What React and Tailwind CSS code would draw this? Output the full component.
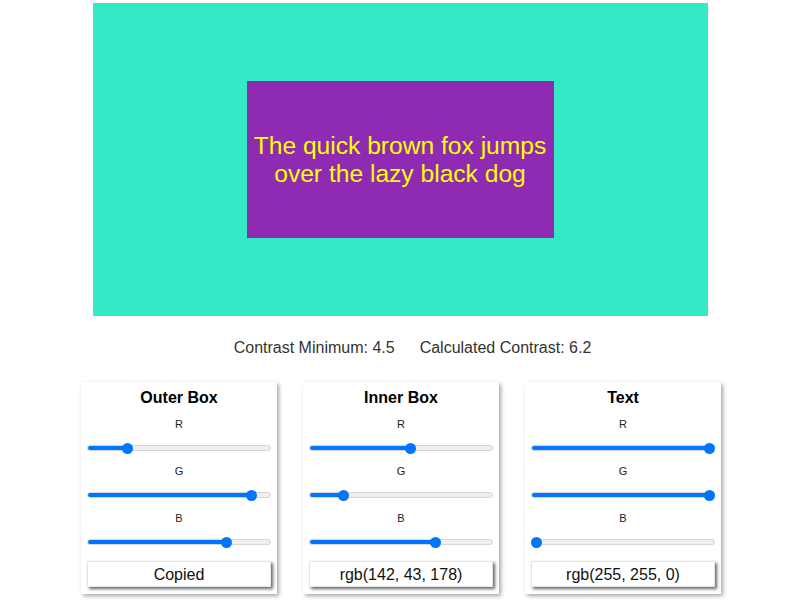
import React from "react";

const cards = [
  { title: "Outer Box", vals: [52, 234, 198], button: "Copied" },
  { title: "Inner Box", vals: [142, 43, 178], button: "rgb(142, 43, 178)" },
  { title: "Text", vals: [255, 255, 0], button: "rgb(255, 255, 0)" },
];

function Slider({ value }) {
  const frac = value / 255;
  const left = 5.5 + frac * 173;
  return (
    <div className="relative mt-[9px] mb-[9px] h-[16px] w-full flex items-center">
      <div
        className="h-[6px] w-full rounded-full border"
        style={{
          background: `linear-gradient(to right, #0075ff 0px, #0075ff ${left}px, #efefef ${left}px, #efefef 100%)`,
          borderColor: "#d6d6d6",
        }}
      />
      <div
        className="absolute top-[2.5px] h-[11px] w-[11px] -ml-[5.5px] rounded-full bg-[#0075ff]"
        style={{ left: `${left}px` }}
      />
    </div>
  );
}

function Card({ title, vals, button }) {
  const labels = ["R", "G", "B"];
  return (
    <div className="w-[196px] bg-white px-[6px] pt-[7px] pb-[7px] shadow-[2px_2px_4px_rgba(0,0,0,0.35)] flex flex-col">
      <div className="h-[18px] leading-[18px] text-center font-bold text-[16px] text-black">{title}</div>
      <div className="mt-[11px] flex flex-col">
        {labels.map((l, i) => (
          <div key={l} className="flex flex-col">
            <div className="h-[13px] leading-[13px] text-center text-[11px] text-[#222]">{l}</div>
            <Slider value={vals[i]} />
          </div>
        ))}
      </div>
      <button className="mt-[2px] h-[26px] w-full bg-white text-[16px] text-[#111] leading-[26px] shadow-[2px_2px_3px_rgba(0,0,0,0.6)] border border-[#e5e5e5]">
        {button}
      </button>
    </div>
  );
}

export default function App() {
  return (
    <div className="w-[800px] h-[600px] bg-white overflow-hidden font-['Liberation_Sans',Arial,sans-serif]">
      <div className="pt-[3px] flex justify-center">
        <div className="w-[615px] h-[313px] bg-[rgb(52,234,198)] flex items-center justify-center">
          <div className="w-[307px] h-[157px] bg-[rgb(142,43,178)] flex items-center justify-center">
            <p className="text-[24.6px] leading-[28px] text-[rgb(255,255,0)] text-center">
              The quick brown fox jumps over the lazy black dog
            </p>
          </div>
        </div>
      </div>
      <div className="mt-[23px] pl-[25px] flex justify-center gap-[25px] text-[16px] leading-[18px] text-[#333]">
        <span>Contrast Minimum: 4.5</span>
        <span>Calculated Contrast: 6.2</span>
      </div>
      <div className="mt-[25px] flex justify-center gap-[26px] pl-[2px]">
        {cards.map((c) => (
          <Card key={c.title} {...c} />
        ))}
      </div>
    </div>
  );
}
